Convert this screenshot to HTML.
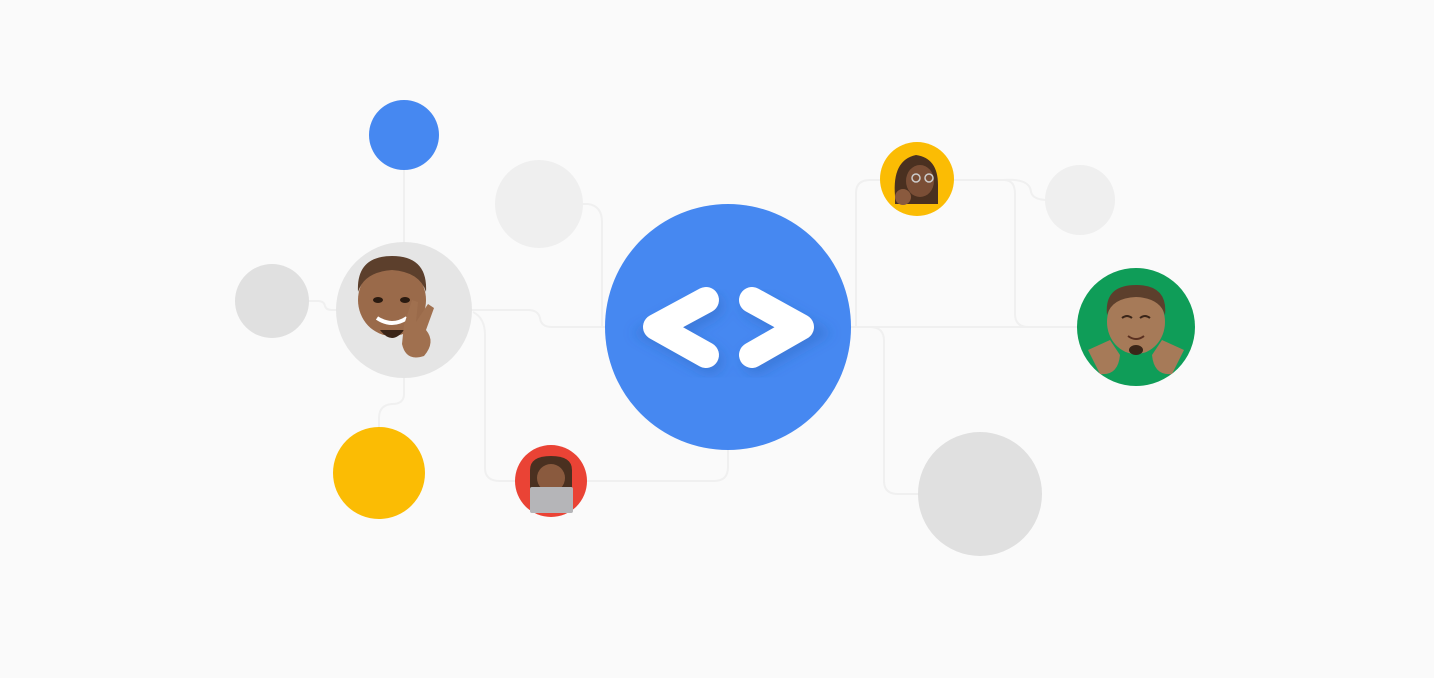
<!DOCTYPE html>
<html><head><meta charset="utf-8"><style>html,body{margin:0;padding:0;background:#fafafa;}svg{display:block}</style></head>
<body>
<svg width="1434" height="678" viewBox="0 0 1434 678" xmlns="http://www.w3.org/2000/svg">
<defs>
<filter id="sh" x="-30%" y="-30%" width="160%" height="160%"><feGaussianBlur stdDeviation="6"/></filter>
</defs>
<rect width="1434" height="678" fill="#fafafa"/>
<g fill="none" stroke="#f0f0f0" stroke-width="2">
<path d="M404 170 V245"/>
<path d="M305 301 H318 Q324 301 325 306 Q326 310 332 310 H340"/>
<path d="M470 310 H528 Q538 310 540 318 Q541 327 552 327 H610"/>
<path d="M473 312 Q485 318 485 335 V468 Q485 481 500 481 H520"/>
<path d="M585 481 H714 Q728 481 728 467 V445"/>
<path d="M580 204 H588 Q602 206 602 222 V327"/>
<path d="M404 376 V394 Q404 404 392 404 Q379 405 379 418 V430"/>
<path d="M850 327 H1080"/>
<path d="M856 327 V193 Q856 180 870 180 H884"/>
<path d="M952 180 H1004 Q1015 180 1015 194 V314 Q1015 327 1029 327"/>
<path d="M1003 180 Q1030 178 1031 192 Q1033 200 1048 200"/>
<path d="M850 327 H870 Q884 327 884 341 V481 Q884 494 898 494 H920"/>
</g>
<circle cx="404" cy="135" r="35" fill="#4688f1"/>
<circle cx="539" cy="204" r="44" fill="#efefef"/>
<circle cx="272" cy="301" r="37" fill="#e0e0e0"/>
<circle cx="404" cy="310" r="68" fill="#e5e5e5"/>
<circle cx="379" cy="473" r="46" fill="#fbbc04"/>
<circle cx="551" cy="481" r="36" fill="#ea4335"/>
<circle cx="917" cy="179" r="37" fill="#fbbc04"/>
<circle cx="1080" cy="200" r="35" fill="#efefef"/>
<circle cx="1136" cy="327" r="59" fill="#0f9d58"/>
<circle cx="980" cy="494" r="62" fill="#e0e0e0"/>
<circle cx="728" cy="327" r="123" fill="#4688f1"/>
<g stroke="#2d5fb0" stroke-opacity="0.35" stroke-width="26" stroke-linecap="round" fill="none" filter="url(#sh)">
<path d="M710 306 L660 333 L710 361"/>
<path d="M756 306 L805 333 L756 361"/>
</g>
<g stroke="#fff" stroke-width="26" stroke-linecap="round" stroke-linejoin="round" fill="none">
<path d="M706 300 L656 327 L706 355"/>
<path d="M752 300 L801 327 L752 355"/>
</g>
<g>
<ellipse cx="392" cy="300" rx="34" ry="36" fill="#9a6a4a"/>
<path d="M358 292 Q356 256 392 256 Q428 256 426 292 Q420 272 392 270 Q364 272 358 292Z" fill="#5c3f2c"/>
<ellipse cx="378" cy="300" rx="5" ry="3" fill="#2a1a10"/>
<ellipse cx="405" cy="300" rx="5" ry="3" fill="#2a1a10"/>
<path d="M377 318 Q392 328 407 318" stroke="#fff" stroke-width="4" fill="none"/>
<path d="M380 330 Q392 346 404 330" fill="#3a2518"/>
<path d="M404 325 L412 300 L418 302 L416 322 L428 304 L434 308 L426 330 Q436 342 424 356 Q406 362 402 344Z" fill="#a0704f"/>
</g>
<g>
<path d="M530 470 Q530 456 551 456 Q572 456 572 470 V500 H530Z" fill="#4a3020"/>
<ellipse cx="551" cy="478" rx="14" ry="14" fill="#8a5a3e"/>
<rect x="530" y="487" width="43" height="26" rx="2" fill="#b5b5b8"/>
</g>
<g>
<path d="M895 196 Q892 160 916 155 Q938 158 938 185 V204 H895Z" fill="#4a3020"/>
<ellipse cx="920" cy="181" rx="14" ry="16" fill="#7a4e36"/>
<circle cx="916" cy="178" r="4" fill="none" stroke="#ccc" stroke-width="1.5"/>
<circle cx="929" cy="178" r="4" fill="none" stroke="#ccc" stroke-width="1.5"/>
<circle cx="903" cy="197" r="8" fill="#8a5a3e"/>
</g>
<g>
<ellipse cx="1136" cy="322" rx="29" ry="32" fill="#a67a58"/>
<path d="M1107 315 Q1104 285 1136 285 Q1168 285 1165 315 Q1160 298 1136 297 Q1112 298 1107 315Z" fill="#5c3f2c"/>
<path d="M1122 318 Q1127 314 1132 318 M1140 318 Q1145 314 1150 318" stroke="#3a2518" stroke-width="2" fill="none"/>
<path d="M1128 336 Q1136 342 1144 336" stroke="#5a3020" stroke-width="2" fill="none"/>
<ellipse cx="1136" cy="350" rx="7" ry="5" fill="#3a2518"/>
<path d="M1088 350 L1110 340 L1120 355 Q1118 376 1100 374Z" fill="#a67a58"/>
<path d="M1184 350 L1162 340 L1152 355 Q1154 376 1172 374Z" fill="#a67a58"/>
</g>
</svg>
</body></html>
